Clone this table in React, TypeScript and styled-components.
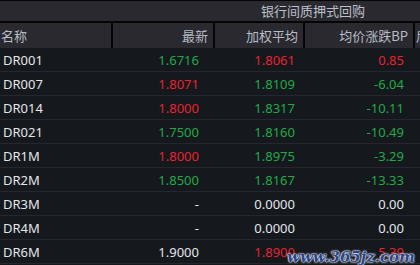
import React from "react";
import styled, { createGlobalStyle } from "styled-components";

const Global = createGlobalStyle`
  html, body { margin: 0; padding: 0; background: #15181d; }
  body { width: 420px; height: 265px; overflow: hidden; font-family: "Noto Sans", "Noto Sans CJK SC", sans-serif; }
`;

const COLS = "111px 102px 90px 110px 1fr";

const Frame = styled.div`
  position: relative;
  width: 420px;
  height: 265px;
  overflow: hidden;
  background: #15181d;
  border-top: 1px solid #050506;
  box-sizing: border-box;
`;

const TitleRow = styled.div`
  display: grid;
  grid-template-columns: ${COLS};
  height: 20px;
  background: #29292f;
  border-bottom: 2px solid #050506;
`;

const Title = styled.div`
  grid-column: 3 / span 2;
  text-align: center;
  color: #bcc0c8;
  font-size: 13px;
  line-height: 20px;
  font-family: "Noto Sans CJK SC", sans-serif;
`;

const HeadRow = styled.div`
  display: grid;
  grid-template-columns: ${COLS};
  height: 25px;
  background: #29292f;
`;

const HeadCell = styled.div<{ $align: "left" | "right"; $first?: boolean }>`
  color: #b8bcc5;
  font-size: 13px;
  line-height: 25px;
  font-family: "Noto Sans CJK SC", sans-serif;
  text-align: ${(p) => p.$align};
  padding: ${(p) => (p.$align === "left" ? "0 0 0 1px" : "0 5px 0 0")};
  border-left: ${(p) => (p.$first ? "none" : "2px solid #050506")};
  white-space: nowrap;
  overflow: hidden;
`;

const Body = styled.div`
  display: flex;
  flex-direction: column;
`;

const Row = styled.div`
  display: grid;
  grid-template-columns: ${COLS};
  height: 24px;
  box-sizing: border-box;
  border-bottom: 1px solid #24272d;
  align-items: center;
  font-size: 13px;
`;

const NameCell = styled.div`
  color: #e4e6ea;
  padding-left: 3px;
`;

type Tone = "up" | "down" | "flat";

const colorOf = (t: Tone) =>
  t === "up" ? "#e8232e" : t === "down" ? "#1faa48" : "#e4e6ea";

const NumCell = styled.div<{ $tone: Tone; $pad: number }>`
  color: ${(p) => colorOf(p.$tone)};
  text-align: right;
  padding-right: ${(p) => p.$pad}px;
`;

const Watermark = styled.div`
  position: absolute;
  right: 5px;
  bottom: -1px;
  font-family: "DejaVu Serif", serif;
  font-weight: bold;
  font-style: italic;
  font-size: 15px;
  color: #28468c;
  text-shadow: 0 0 2px #fff, 0 0 2px #fff, 0 0 1px #fff;
`;

type Item = {
  name: string;
  last: string;
  lastT: Tone;
  avg: string;
  avgT: Tone;
  bp: string;
  bpT: Tone;
};

const rows: Item[] = [
  { name: "DR001", last: "1.6716", lastT: "down", avg: "1.8061", avgT: "up", bp: "0.85", bpT: "up" },
  { name: "DR007", last: "1.8071", lastT: "up", avg: "1.8109", avgT: "down", bp: "-6.04", bpT: "down" },
  { name: "DR014", last: "1.8000", lastT: "up", avg: "1.8317", avgT: "down", bp: "-10.11", bpT: "down" },
  { name: "DR021", last: "1.7500", lastT: "down", avg: "1.8160", avgT: "down", bp: "-10.49", bpT: "down" },
  { name: "DR1M", last: "1.8000", lastT: "up", avg: "1.8975", avgT: "down", bp: "-3.29", bpT: "down" },
  { name: "DR2M", last: "1.8500", lastT: "down", avg: "1.8167", avgT: "down", bp: "-13.33", bpT: "down" },
  { name: "DR3M", last: "-", lastT: "flat", avg: "0.0000", avgT: "flat", bp: "0.00", bpT: "flat" },
  { name: "DR4M", last: "-", lastT: "flat", avg: "0.0000", avgT: "flat", bp: "0.00", bpT: "flat" },
  { name: "DR6M", last: "1.9000", lastT: "flat", avg: "1.8900", avgT: "up", bp: "5.39", bpT: "up" },
];

export default function App() {
  return (
    <>
      <Global />
      <Frame>
        <TitleRow>
          <Title>银行间质押式回购</Title>
        </TitleRow>
        <HeadRow>
          <HeadCell $align="left" $first>名称</HeadCell>
          <HeadCell $align="right">最新</HeadCell>
          <HeadCell $align="right">加权平均</HeadCell>
          <HeadCell $align="right">均价涨跌BP</HeadCell>
          <HeadCell $align="left">后</HeadCell>
        </HeadRow>
        <Body>
          {rows.map((r) => (
            <Row key={r.name}>
              <NameCell>{r.name}</NameCell>
              <NumCell $tone={r.lastT} $pad={14}>{r.last}</NumCell>
              <NumCell $tone={r.avgT} $pad={8}>{r.avg}</NumCell>
              <NumCell $tone={r.bpT} $pad={9}>{r.bp}</NumCell>
              <div />
            </Row>
          ))}
        </Body>
        <Watermark>www.365jz.com</Watermark>
      </Frame>
    </>
  );
}
